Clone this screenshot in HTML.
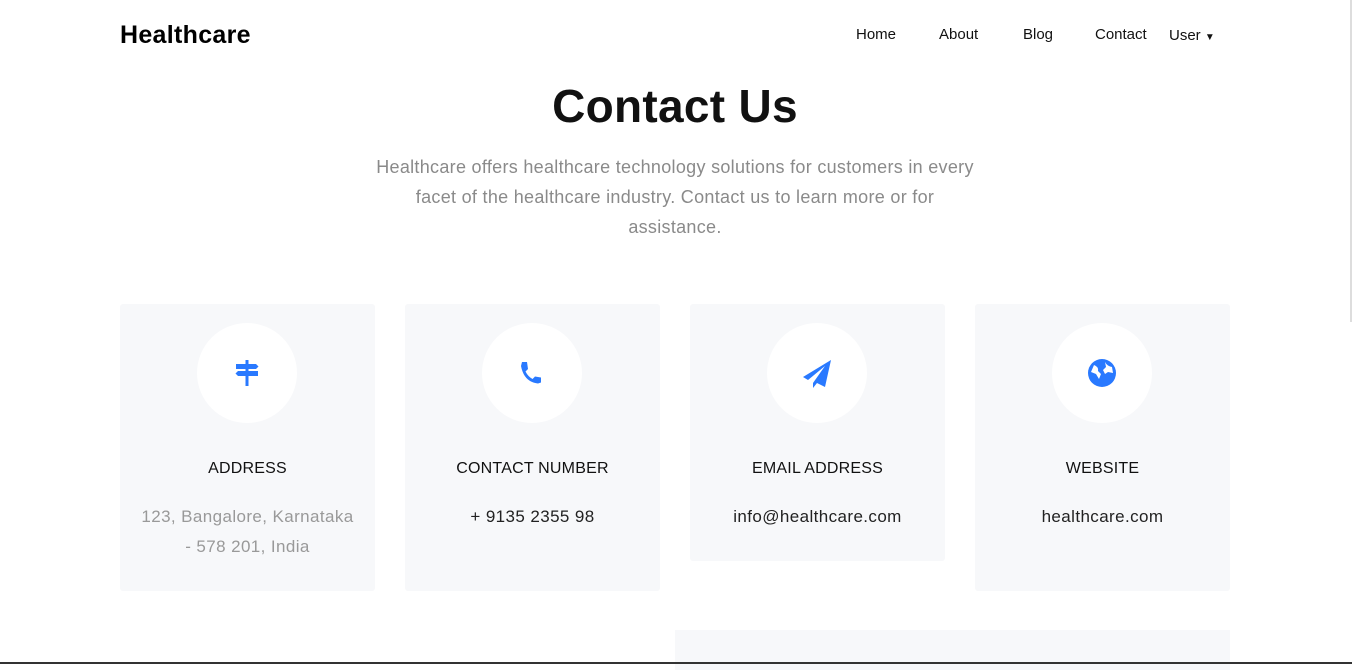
<!DOCTYPE html>
<html><head><style>
body{margin:0;width:1352px;height:664px;overflow:hidden;background:#fff;font-family:"Liberation Sans",sans-serif;position:relative}
.logo{position:absolute;left:120px;top:21px;font-size:25px;font-weight:900;color:#000;letter-spacing:0.3px}
.nav a{position:absolute;top:26px;font-size:15px;color:#111;text-decoration:none}
h1{position:absolute;top:79px;left:0;width:1350px;text-align:center;margin:0;font-size:46px;font-weight:700;color:#111;letter-spacing:0.3px}
.sub{position:absolute;top:152px;left:300px;width:750px;text-align:center;font-size:18px;line-height:30px;color:#8a8a8a;letter-spacing:0.3px}
.card{position:absolute;top:304px;width:255px;height:287px;background:#f7f8fa;border-radius:3px;text-align:center}
.circ{position:absolute;left:77px;top:19px;width:100px;height:100px;border-radius:50%;background:#fff}
.circ svg{position:absolute;left:35px;top:35px}
.t{position:absolute;top:156px;width:100%;font-size:16px;color:#111;letter-spacing:0.2px}
.v{position:absolute;top:198px;left:0;right:0;font-size:17px;line-height:30px;color:#222;letter-spacing:0.4px}
.sb{position:absolute;right:0;top:0;width:2px;height:322px;background:#ddd}
</style></head><body>
<div class="logo">Healthcare</div>
<div class="nav"><a style="left:856px">Home</a><a style="left:939px">About</a><a style="left:1023px">Blog</a><a style="left:1095px">Contact</a><a style="left:1169px;top:27px">User <span style="font-size:10px">▼</span></a></div>
<div class="sb"></div>
<h1>Contact Us</h1>
<div class="sub">Healthcare offers healthcare technology solutions for customers in every<br>facet of the healthcare industry. Contact us to learn more or for<br>assistance.</div>
<div class="card" style="left:120px"><div class="circ"><svg width="30" height="30" viewBox="0 0 30 30" fill="#2979ff"><rect x="13.5" y="2" width="3" height="26"/><path d="M4 6h20l2.5 2.5L24 11H4z"/><path d="M26 13H6l-2.5 2.5L6 18h20z"/></svg></div><div class="t">ADDRESS</div><div class="v" style="color:#999">123, Bangalore, Karnataka<br>- 578 201, India</div></div>
<div class="card" style="left:405px"><div class="circ"><svg width="30" height="30" viewBox="0 0 30 30" fill="#2979ff"><path d="M5 4h5l1 7-2.5 2.5q2.5 5 7 7.5l2.5-2.5 6 1v5l-3 1Q7 24 4 8z"/></svg></div><div class="t">CONTACT NUMBER</div><div class="v">+ 9135 2355 98</div></div>
<div class="card" style="left:690px;height:257px"><div class="circ"><svg width="30" height="30" viewBox="0 0 30 30" fill="#2979ff"><path d="M29 2L1 19l5 3 17-14-12 17v5l4-5 8 4z"/></svg></div><div class="t">EMAIL ADDRESS</div><div class="v">info@healthcare.com</div></div>
<div class="card" style="left:975px"><div class="circ"><svg width="30" height="30" viewBox="0 0 30 30"><circle cx="15" cy="15" r="14" fill="#2979ff"/><path d="M7 7q5 2 4 6l3 3-2 5-3-5-5-2zM18 4q2 4 7 5l1 6-5-1-3 2-2-4 3-3z" fill="#fff"/></svg></div><div class="t">WEBSITE</div><div class="v">healthcare.com</div></div>
<div style="position:absolute;left:675px;top:630px;width:555px;height:40px;background:#f7f8fa"></div>
<div style="position:absolute;left:0;top:662px;width:1352px;height:2px;background:#333"></div>
</body></html>
